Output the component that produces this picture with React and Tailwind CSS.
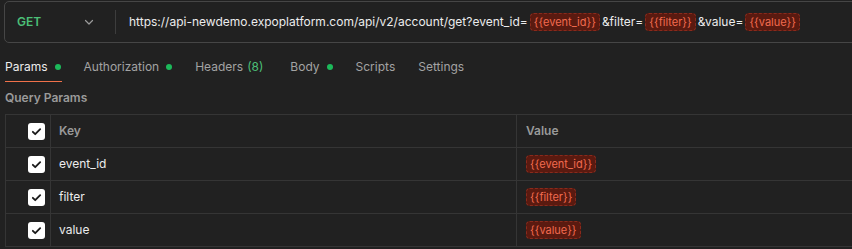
import React from "react";

const rows = [
  { key: "event_id", value: "{{event_id}}" },
  { key: "filter", value: "{{filter}}" },
  { key: "value", value: "{{value}}" },
];

const tabs = [
  { label: "Params", dot: true, active: true },
  { label: "Authorization", dot: true },
  { label: "Headers", count: "(8)" },
  { label: "Body", dot: true },
  { label: "Scripts" },
  { label: "Settings" },
];

const Var = ({ children }) => (
  <span className="inline-flex items-center h-[18px] px-[3px] rounded-[4px] bg-[#5a1a10] border border-dashed border-[#8a2a1c] text-[#f26b4f] text-[11px]">
    {children}
  </span>
);

const Check = () => (
  <span className="flex items-center justify-center w-[17px] h-[17px] rounded-[3px] bg-white">
    <svg width="11" height="11" viewBox="0 0 12 12" fill="none">
      <path d="M2 6.3l2.6 2.6L10 3.4" stroke="#1a1a1a" strokeWidth="2" strokeLinecap="round" strokeLinejoin="round" />
    </svg>
  </span>
);

export default function App() {
  return (
    <div className="w-[852px] h-[249px] overflow-hidden bg-[#212121] font-['Inter',sans-serif] text-[12px]">
      <div className="pl-[4px] pt-[1px]">
        <div className="flex items-center h-[42px] w-[900px] border border-[#464646] rounded-[5px]">
          <div className="flex items-center w-[110px] pl-[12px]">
            <span className="text-[#4cbf77] font-semibold">GET</span>
            <svg className="ml-[42px]" width="12" height="12" viewBox="0 0 12 12" fill="none">
              <path d="M2.5 4.5L6 8l3.5-3.5" stroke="#9a9a9a" strokeWidth="1.2" strokeLinecap="round" strokeLinejoin="round" />
            </svg>
          </div>
          <div className="w-px h-[24px] bg-[#3d3d3d]" />
          <div className="flex items-center gap-[2px] pl-[13px] text-[#ececec] whitespace-nowrap">
            <span>https://api-newdemo.expoplatform.com/api/v2/account/get?event_id=</span>
            <Var>{"{{event_id}}"}</Var>
            <span>&amp;filter=</span>
            <Var>{"{{filter}}"}</Var>
            <span>&amp;value=</span>
            <Var>{"{{value}}"}</Var>
          </div>
        </div>
      </div>

      <div className="flex items-center gap-[23px] pl-[5px] mt-[10px] h-[28px]">
        {tabs.map((t) => (
          <div key={t.label} className={`relative flex items-center h-full ${t.count ? "mr-[4px]" : ""} ${t.active ? "text-[#ededed]" : "text-[#a3a3a3]"}`}>
            <span>{t.label}</span>
            {t.count && <span className="ml-[4px] text-[#4cbf77]">{t.count}</span>}
            {t.dot && <span className="ml-[7px] w-[6px] h-[6px] rounded-full bg-[#1cb95a]" />}
            {t.active && <span className="absolute left-0 right-[-1px] bottom-[-1px] h-[1px] bg-[#f0714a]" />}
          </div>
        ))}
      </div>

      <div className="pl-[5px] mt-[8px] text-[12px] font-semibold text-[#9a9a9a]">Query Params</div>

      <div className="ml-[5px] mt-[7px] border-l border-t border-[#353535]">
        <div className="flex h-[33px] border-b border-[#353535]">
          <div className="w-[45px] flex items-center justify-end pr-[5px] border-r border-[#353535]">
            <Check />
          </div>
          <div className="w-[466px] flex items-center pl-[8px] border-r border-[#353535] text-[#9a9a9a] font-semibold">Key</div>
          <div className="flex-1 flex items-center pl-[9px] text-[#9a9a9a] font-semibold">Value</div>
        </div>
        {rows.map((r) => (
          <div key={r.key} className="flex h-[33px] border-b border-[#353535]">
            <div className="w-[45px] flex items-center justify-end pr-[5px] border-r border-[#353535]">
              <Check />
            </div>
            <div className="w-[466px] flex items-center pl-[8px] pb-[1px] border-r border-[#353535] text-[#ececec]">{r.key}</div>
            <div className="flex-1 flex items-center pl-[9px]">
              <Var>{r.value}</Var>
            </div>
          </div>
        ))}
      </div>
    </div>
  );
}
